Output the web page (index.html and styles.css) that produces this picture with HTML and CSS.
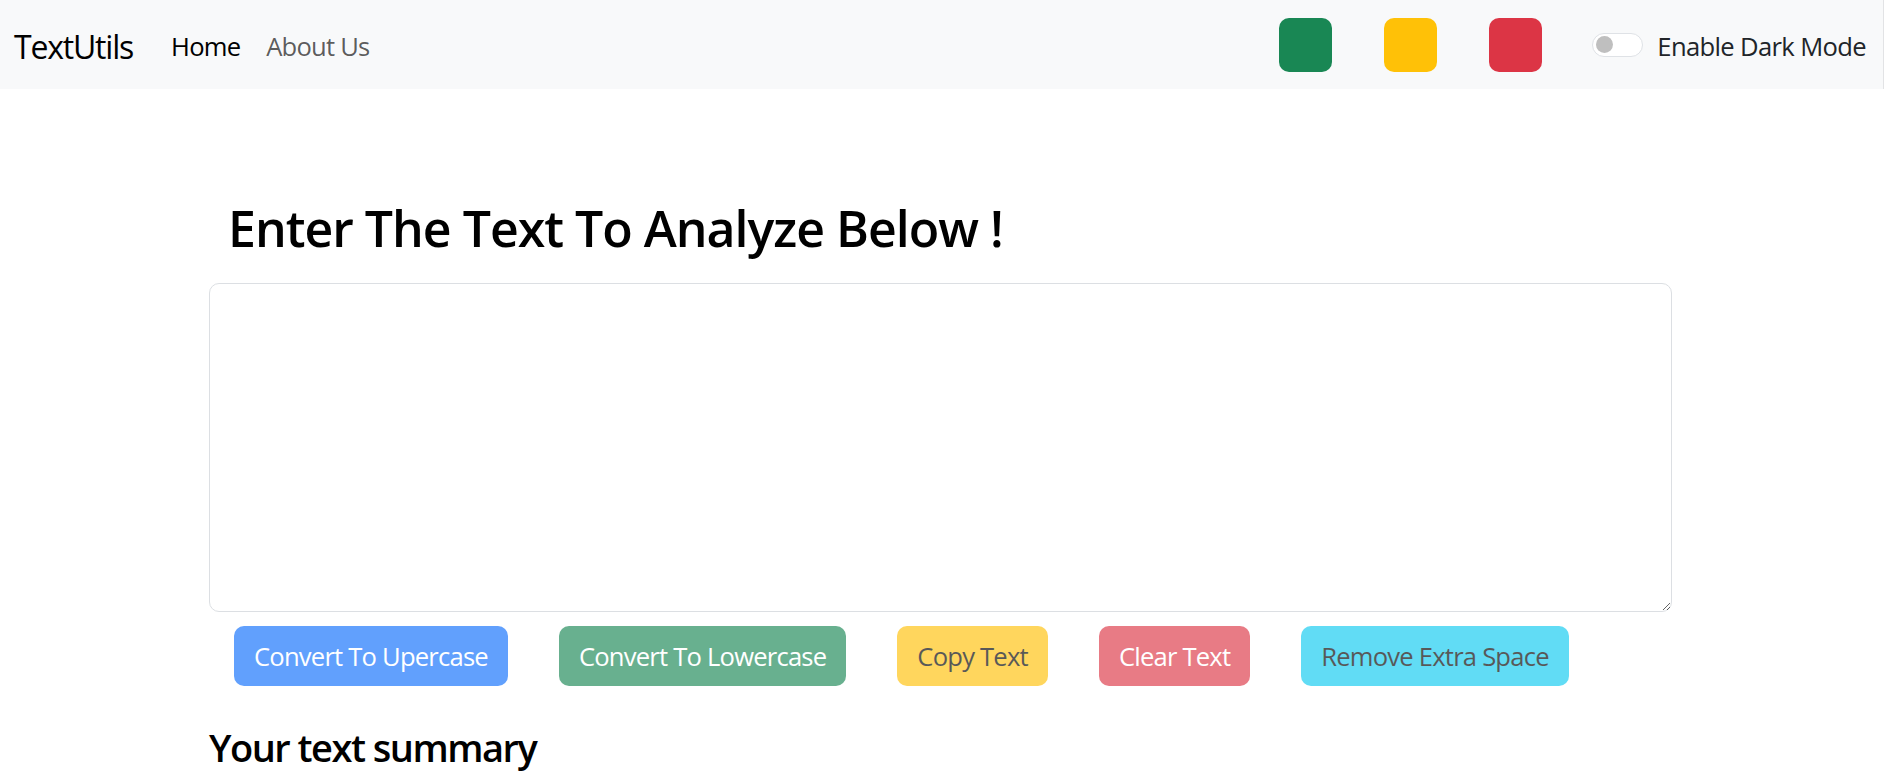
FILE: index.html
```html
<!DOCTYPE html>
<html lang="en">
<head>
<meta charset="utf-8">
<title>TextUtils</title>
<link rel="stylesheet" href="styles.css">
</head>
<body>
<nav class="navbar">
  <a class="brand" href="#">TextUtils</a>
  <ul class="nav-links">
    <li><a class="nav-link active" href="#">Home</a></li>
    <li><a class="nav-link" href="#">About Us</a></li>
  </ul>
  <div class="swatches">
    <div class="swatch swatch-green"></div>
    <div class="swatch swatch-yellow"></div>
    <div class="swatch swatch-red"></div>
  </div>
  <div class="switch">
    <span class="switch-track"><span class="switch-knob"></span></span>
    <label class="switch-label">Enable Dark Mode</label>
  </div>
</nav>
<main class="container">
  <h1 class="title">Enter The Text To Analyze Below !</h1>
  <textarea class="text-input"></textarea>
  <div class="actions">
    <button class="btn btn-primary">Convert To Upercase</button>
    <button class="btn btn-success">Convert To Lowercase</button>
    <button class="btn btn-warning">Copy Text</button>
    <button class="btn btn-danger">Clear Text</button>
    <button class="btn btn-info">Remove Extra Space</button>
  </div>
  <h2 class="summary-title">Your text summary</h2>
</main>
</body>
</html>
```
FILE: styles.css
```css
html, body {
  margin: 0;
  padding: 0;
  background: #ffffff;
  font-family: "Open Sans", "Noto Sans", sans-serif;
  color: #000;
  overflow: hidden;
}

.navbar {
  display: flex;
  align-items: center;
  height: 89px;
  width: 1884px;
  box-sizing: border-box;
  padding: 0 17px 0 14px;
  background: #f8f9fa;
  border-right: 1px solid #e2e3e5;
}

.brand {
  padding-top: 4px;
  font-size: 32px;
  color: #000;
  text-decoration: none;
  letter-spacing: -1.2px;
  margin-right: 25px;
}

.nav-links {
  display: flex;
  list-style: none;
  margin: 0;
  padding: 4px 0 0 0;
}

.nav-link {
  display: block;
  padding: 0 13px;
  font-size: 25.6px;
  color: rgba(0, 0, 0, 0.65);
  text-decoration: none;
  letter-spacing: -0.8px;
}

.nav-link.active {
  color: #000;
}

.swatches {
  display: flex;
  gap: 52px;
  margin-left: auto;
  margin-right: 50px;
}

.swatch {
  width: 53px;
  height: 54px;
  border-radius: 10px;
}

.swatch-green { background: #198754; }
.swatch-yellow { background: #ffc107; }
.swatch-red { background: #dc3545; }

.switch {
  display: flex;
  align-items: center;
  gap: 14px;
}

.switch-track {
  display: flex;
  align-items: center;
  box-sizing: border-box;
  width: 51px;
  height: 24px;
  border: 1.5px solid #dfe2e6;
  border-radius: 12px;
  background: #ffffff;
  padding-left: 3px;
}

.switch-knob {
  width: 17px;
  height: 17px;
  border-radius: 50%;
  background: #bfbfbf;
}

.switch-label {
  padding-top: 4px;
  font-size: 25.6px;
  color: #212529;
  letter-spacing: -0.65px;
}

.container {
  width: 1463px;
  margin-left: 209px;
}

.title {
  margin: 0;
  padding: 104px 0 0 19px;
  font-size: 50px;
  font-weight: 600;
  line-height: 70px;
  letter-spacing: -1px;
  color: #000;
}

.text-input {
  display: block;
  box-sizing: border-box;
  width: 1463px;
  height: 329px;
  margin-top: 20px;
  border: 1px solid #dcdfe3;
  border-radius: 10px;
  background: #fff;
  resize: vertical;
  outline: none;
}

.actions {
  display: flex;
  margin-top: 14px;
  padding-left: 25px;
  gap: 51px;
}

.btn {
  box-sizing: border-box;
  height: 60px;
  padding: 0 19px;
  border: 1.6px solid transparent;
  border-radius: 10px;
  font-family: "Open Sans", "Noto Sans", sans-serif;
  font-size: 25.6px;
  letter-spacing: -0.79px;
  opacity: 0.65;
  cursor: default;
}

.btn-primary { background: #0d6efd; color: #fff; }
.btn-success { background: #198754; color: #fff; }
.btn-warning { background: #ffc107; color: #000; }
.btn-danger { background: #dc3545; color: #fff; }
.btn-info { background: #0dcaf0; color: #000; }

.summary-title {
  margin: 36px 0 0 0;
  font-size: 38px;
  font-weight: 600;
  line-height: 50px;
  letter-spacing: -1.5px;
  color: #000;
}
```
